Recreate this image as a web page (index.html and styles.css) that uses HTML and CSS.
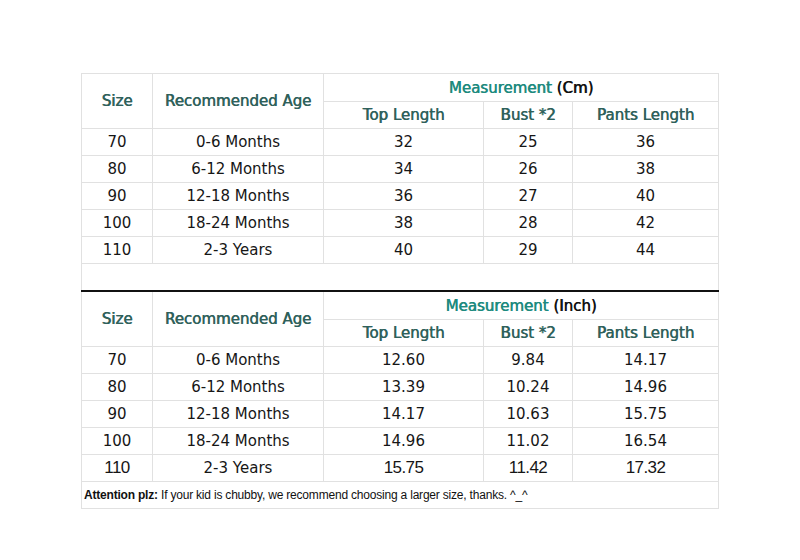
FILE: index.html
```html
<!DOCTYPE html>
<html>
<head>
<meta charset="utf-8">
<link rel="stylesheet" href="styles.css">
</head>
<body>
<table class="chart">
  <colgroup>
    <col class="c-size"><col class="c-age"><col class="c-top"><col class="c-bust"><col class="c-pants">
  </colgroup>
  <tr class="hrow1">
    <th rowspan="2" class="hd">Size</th>
    <th rowspan="2" class="hd">Recommended Age</th>
    <th colspan="3" class="meas"><span class="teal">Measurement</span> (Cm)</th>
  </tr>
  <tr class="hrow2">
    <th class="hd">Top Length</th>
    <th class="hd">Bust *2</th>
    <th class="hd">Pants Length</th>
  </tr>
  <tr><td>70</td><td>0-6 Months</td><td>32</td><td>25</td><td>36</td></tr>
  <tr><td>80</td><td>6-12 Months</td><td>34</td><td>26</td><td>38</td></tr>
  <tr><td>90</td><td>12-18 Months</td><td>36</td><td>27</td><td>40</td></tr>
  <tr><td>100</td><td>18-24 Months</td><td>38</td><td>28</td><td>42</td></tr>
  <tr><td>110</td><td>2-3 Years</td><td>40</td><td>29</td><td>44</td></tr>
  <tr class="blank"><td colspan="5"></td></tr>
  <tr class="hrow1 split">
    <th rowspan="2" class="hd">Size</th>
    <th rowspan="2" class="hd">Recommended Age</th>
    <th colspan="3" class="meas"><span class="teal">Measurement</span> (Inch)</th>
  </tr>
  <tr class="hrow2">
    <th class="hd">Top Length</th>
    <th class="hd">Bust *2</th>
    <th class="hd">Pants Length</th>
  </tr>
  <tr><td>70</td><td>0-6 Months</td><td>12.60</td><td>9.84</td><td>14.17</td></tr>
  <tr><td>80</td><td>6-12 Months</td><td>13.39</td><td>10.24</td><td>14.96</td></tr>
  <tr><td>90</td><td>12-18 Months</td><td>14.17</td><td>10.63</td><td>15.75</td></tr>
  <tr><td>100</td><td>18-24 Months</td><td>14.96</td><td>11.02</td><td>16.54</td></tr>
  <tr class="plain"><td class="arial">110</td><td>2-3 Years</td><td class="arial">15.75</td><td class="arial">11.42</td><td class="arial">17.32</td></tr>
  <tr class="note"><td colspan="5"><b>Attention plz:</b> If your kid is chubby, we recommend choosing a larger size, thanks. ^_^</td></tr>
</table>
</body>
</html>
```
FILE: styles.css
```css
html, body {
  margin: 0;
  padding: 0;
  background: #ffffff;
}
body {
  padding: 73px 0 0 81px;
}
.chart {
  border-collapse: collapse;
  table-layout: fixed;
  width: 637px;
  font-family: "DejaVu Sans", sans-serif;
  font-size: 15px;
  color: #161616;
}
.c-size { width: 71px; }
.c-age { width: 171px; }
.c-top { width: 160px; }
.c-bust { width: 89px; }
.c-pants { width: 146px; }
.chart td, .chart th {
  border: 1px solid #e1e1e1;
  padding: 0;
  height: 26px;
  text-align: center;
  vertical-align: middle;
  white-space: nowrap;
}
.chart th {
  font-weight: normal;
  font-size: 15px;
  text-shadow: 0.6px 0 0 currentColor;
}
.hd {
  color: #2f615b;
}
.meas {
  color: #111111;
}
.teal {
  color: #1c8a7e;
}
.hrow1 th { height: 27px; }
.blank td { height: 26px; }
.split th { border-top: 2px solid #111111; }
.arial {
  font-family: "Liberation Sans", Arial, sans-serif;
  font-size: 17px;
  letter-spacing: -0.6px;
}
.note td {
  text-align: left;
  font-family: "Liberation Sans", Arial, sans-serif;
  font-size: 12px;
  letter-spacing: -0.2px;
  padding-left: 2px;
  color: #111111;
}
```
